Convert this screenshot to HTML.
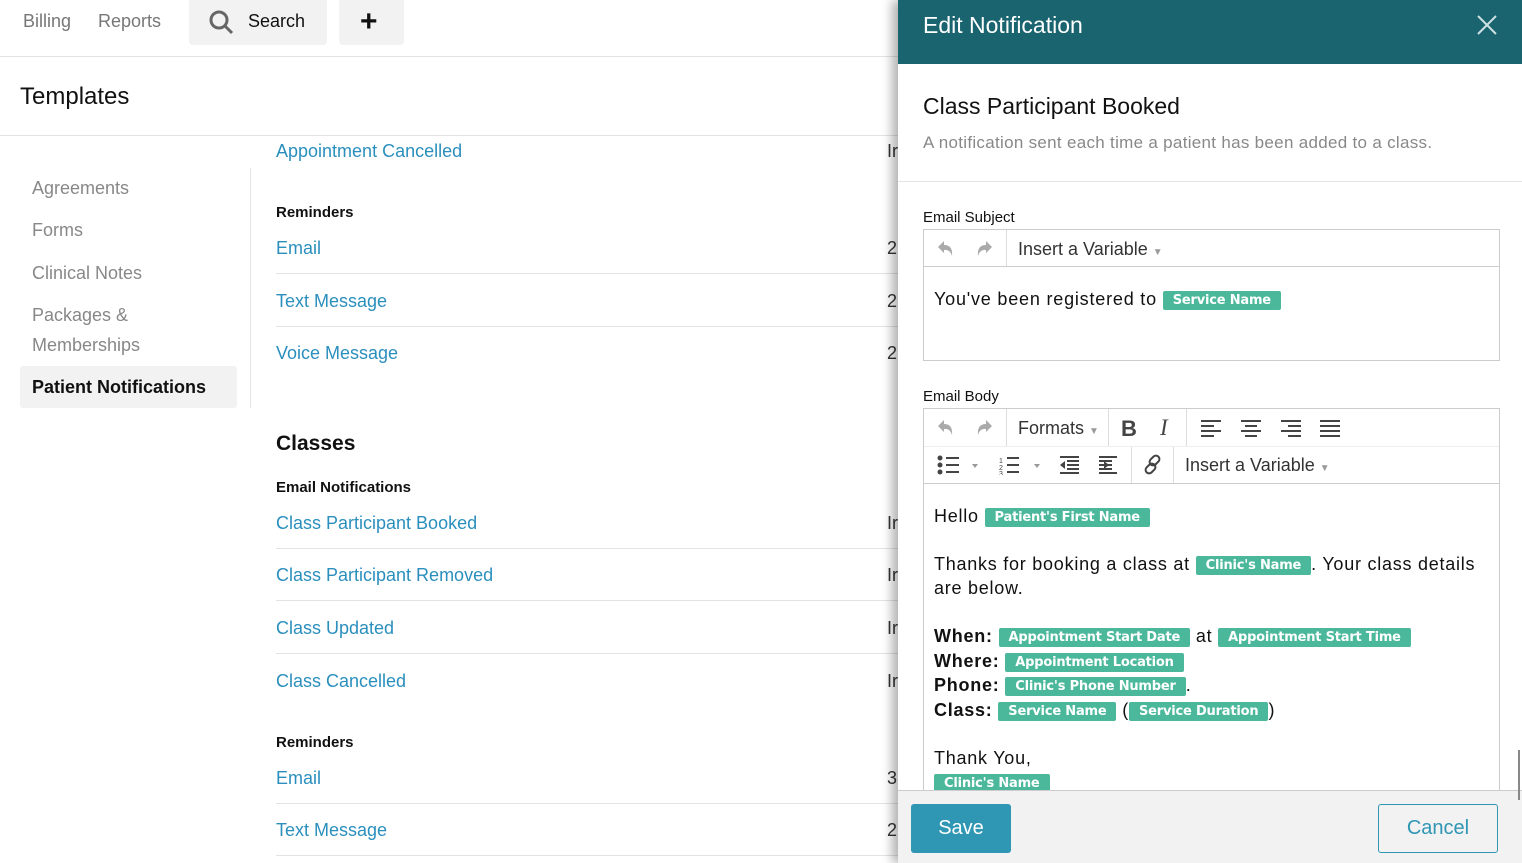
<!DOCTYPE html>
<html><head><meta charset="utf-8"><style>
*{margin:0;padding:0;box-sizing:border-box}
body{width:1522px;height:863px;overflow:hidden;background:#fff;font-family:"Liberation Sans",sans-serif;position:relative;color:#111}
.a{position:absolute;white-space:nowrap}
.lnk{color:#2a8fbd;font-size:18px}
.hr{position:absolute;height:1px;background:#e3e3e3}
.nav{color:#777;font-size:18px}
.side{color:#888;font-size:18px}
.sub{font-size:15px;font-weight:bold;color:#111}
.cut{color:#333;font-size:18px}
.tag{display:inline-block;background:#4cb89b;color:#fff;font-weight:bold;font-size:13px;padding:1px 10px;border-radius:2px;line-height:17px;vertical-align:1px;font-family:"DejaVu Sans",sans-serif;letter-spacing:-0.2px;white-space:nowrap}
.tb{color:#333;font-size:18px}
</style></head><body>
<div class="a nav" style="left:23px;top:11px">Billing</div>
<div class="a nav" style="left:98px;top:11px">Reports</div>
<div class="a" style="left:189px;top:0;width:138px;height:45px;background:#f2f2f2;border-radius:0 0 4px 4px"></div>
<svg class="a" style="left:208px;top:9px" width="28" height="28"><circle cx="11" cy="11" r="8" fill="none" stroke="#666" stroke-width="3"/><line x1="17" y1="17" x2="24" y2="24" stroke="#666" stroke-width="3"/></svg>
<div class="a" style="left:248px;top:11px;font-size:18px">Search</div>
<div class="a" style="left:339px;top:0;width:65px;height:45px;background:#f2f2f2;border-radius:0 0 4px 4px"></div>
<div class="a" style="left:360px;top:5px;font-size:30px;font-weight:bold">+</div>
<div class="hr" style="left:0;top:56px;width:898px"></div>
<div class="a" style="left:20px;top:83px;font-size:24px">Templates</div>
<div class="hr" style="left:0;top:135px;width:898px"></div>
<div class="a side" style="left:32px;top:178px">Agreements</div>
<div class="a side" style="left:32px;top:220px">Forms</div>
<div class="a side" style="left:32px;top:263px">Clinical Notes</div>
<div class="a side" style="left:32px;top:300px;line-height:30px;white-space:normal">Packages &amp;<br>Memberships</div>
<div class="a" style="left:20px;top:366px;width:217px;height:42px;background:#f2f2f2;border-radius:3px"></div>
<div class="a" style="left:32px;top:377px;font-size:18px;font-weight:bold">Patient Notifications</div>
<div class="a" style="left:250px;top:168px;width:1px;height:240px;background:#e3e3e3"></div>
<div class="a lnk" style="left:276px;top:141px">Appointment Cancelled</div><div class="a cut" style="left:887px;top:141px">Ir</div>
<div class="a sub" style="left:276px;top:204px">Reminders</div>
<div class="a lnk" style="left:276px;top:238px">Email</div><div class="a cut" style="left:887px;top:238px">2</div>
<div class="hr" style="left:276px;top:273px;width:622px"></div>
<div class="a lnk" style="left:276px;top:291px">Text Message</div><div class="a cut" style="left:887px;top:291px">2</div>
<div class="hr" style="left:276px;top:326px;width:622px"></div>
<div class="a lnk" style="left:276px;top:343px">Voice Message</div><div class="a cut" style="left:887px;top:343px">2</div>
<div class="a" style="left:276px;top:432px;font-size:21px;font-weight:bold">Classes</div>
<div class="a sub" style="left:276px;top:479px">Email Notifications</div>
<div class="a lnk" style="left:276px;top:513px">Class Participant Booked</div><div class="a cut" style="left:887px;top:513px">Ir</div>
<div class="hr" style="left:276px;top:548px;width:622px"></div>
<div class="a lnk" style="left:276px;top:565px">Class Participant Removed</div><div class="a cut" style="left:887px;top:565px">Ir</div>
<div class="hr" style="left:276px;top:600px;width:622px"></div>
<div class="a lnk" style="left:276px;top:618px">Class Updated</div><div class="a cut" style="left:887px;top:618px">Ir</div>
<div class="hr" style="left:276px;top:653px;width:622px"></div>
<div class="a lnk" style="left:276px;top:671px">Class Cancelled</div><div class="a cut" style="left:887px;top:671px">Ir</div>
<div class="a sub" style="left:276px;top:734px">Reminders</div>
<div class="a lnk" style="left:276px;top:768px">Email</div><div class="a cut" style="left:887px;top:768px">3</div>
<div class="hr" style="left:276px;top:803px;width:622px"></div>
<div class="a lnk" style="left:276px;top:820px">Text Message</div><div class="a cut" style="left:887px;top:820px">2</div>
<div class="hr" style="left:276px;top:855px;width:622px"></div>
<div class="a" style="left:898px;top:0;width:624px;height:863px;background:#fff;box-shadow:-6px 0 10px rgba(0,0,0,.3)"></div>
<div class="a" style="left:898px;top:0;width:624px;height:64px;background:#19646f"></div>
<div class="a" style="left:923px;top:12px;font-size:23px;color:#fff">Edit Notification</div>
<svg class="a" style="left:1477px;top:15px" width="20" height="20"><path d="M1 1L19 19M19 1L1 19" stroke="#cfe0e2" stroke-width="2"/></svg>
<div class="a" style="left:923px;top:93px;font-size:23px;color:#111">Class Participant Booked</div>
<div class="a" style="left:923px;top:133px;font-size:17px;color:#888;letter-spacing:0.3px">A notification sent each time a patient has been added to a class.</div>
<div class="hr" style="left:898px;top:181px;width:624px"></div>
<div class="a" style="left:923px;top:209px;font-size:15px">Email Subject</div>
<div class="a" style="left:923px;top:229px;width:577px;height:132px;border:1px solid #ccc"></div>
<div class="a" style="left:924px;top:266px;width:575px;height:1px;background:#ccc"></div>
<div class="a" style="left:1006px;top:230px;width:1px;height:36px;background:#ddd"></div>
<svg class="a" style="left:935px;top:240px" width="60" height="18"><path d="M3 7L9 1V5Q18 5 17 16Q15 9 9 10V13Z" fill="#aaa"/><path d="M57 7L51 1V5Q42 5 43 16Q45 9 51 10V13Z" fill="#aaa"/></svg>
<div class="a tb" style="left:1018px;top:239px">Insert a Variable <span style="font-size:10px;color:#999">▼</span></div>
<div class="a" style="left:934px;top:289px;font-size:18px;letter-spacing:0.8px">You've been registered to <span class="tag" style="letter-spacing:-0.2px">Service Name</span></div>
<div class="a" style="left:923px;top:388px;font-size:15px">Email Body</div>
<div class="a" style="left:923px;top:408px;width:577px;height:400px;border:1px solid #ccc"></div>
<div class="a" style="left:924px;top:483px;width:575px;height:1px;background:#ccc"></div>
<div class="a" style="left:924px;top:446px;width:575px;height:1px;background:#eee"></div>
<svg class="a" style="left:935px;top:419px" width="60" height="18"><path d="M3 7L9 1V5Q18 5 17 16Q15 9 9 10V13Z" fill="#aaa"/><path d="M57 7L51 1V5Q42 5 43 16Q45 9 51 10V13Z" fill="#aaa"/></svg>
<div class="a" style="left:1006px;top:409px;width:1px;height:37px;background:#ddd"></div>
<div class="a tb" style="left:1018px;top:418px">Formats <span style="font-size:10px;color:#999">▼</span></div>
<div class="a" style="left:1108px;top:409px;width:1px;height:37px;background:#ddd"></div>
<div class="a" style="left:1121px;top:416px;font-size:22px;font-weight:bold;color:#444">B</div>
<div class="a" style="left:1160px;top:415px;font-size:23px;font-style:italic;font-family:'Liberation Serif',serif;color:#444">I</div>
<div class="a" style="left:1186px;top:409px;width:1px;height:37px;background:#ddd"></div>
<svg class="a" style="left:1201px;top:419px" width="142" height="18"><g stroke="#444" stroke-width="2"><path d="M0 2H20M0 7H13M0 12H20M0 17H13"/><path d="M40 2H60M44 7H56M40 12H60M44 17H56"/><path d="M80 2H100M87 7H100M80 12H100M87 17H100"/><path d="M119 2H139M119 7H139M119 12H139M119 17H139"/></g></svg>
<svg class="a" style="left:937px;top:455px" width="180" height="20"><g fill="#444"><circle cx="3" cy="3" r="2.5"/><circle cx="3" cy="10" r="2.5"/><circle cx="3" cy="17" r="2.5"/></g><g stroke="#444" stroke-width="2"><path d="M9 3H22M9 10H22M9 17H22"/><path d="M70 3H82M70 10H82M70 17H82"/><path d="M123 2H142M130 6H142M130 10H142M130 14H142M123 18H142M162 2H181M162 6H175M162 10H175M162 14H175M162 18H181"/></g><path d="M35 9L41 9L38 13Z M97 9L103 9L100 13Z" fill="#999"/><path d="M128 6L123 10L128 14Z M167 6L172 10L167 14Z" fill="#444"/><text x="62" y="8" font-size="7" fill="#444">1</text><text x="62" y="15" font-size="7" fill="#444">2</text><text x="62" y="21" font-size="7" fill="#444">3</text></svg>
<div class="a" style="left:1131px;top:447px;width:1px;height:36px;background:#ddd"></div>
<svg class="a" style="left:1142px;top:454px" width="22" height="22"><g fill="none" stroke="#444" stroke-width="2"><rect x="9" y="1" width="7" height="11" rx="3.5" transform="rotate(45 12.5 6.5)"/><rect x="5" y="9" width="7" height="11" rx="3.5" transform="rotate(45 8.5 14.5)"/></g></svg>
<div class="a" style="left:1173px;top:447px;width:1px;height:36px;background:#ddd"></div>
<div class="a tb" style="left:1185px;top:455px">Insert a Variable <span style="font-size:10px;color:#999">▼</span></div>
<div class="a" style="left:924px;top:484px;width:575px;height:306px;overflow:hidden;font-size:18px;letter-spacing:0.75px;line-height:24px;padding:20px 10px 0;white-space:normal">
<div>Hello <span class="tag">Patient's First Name</span></div>
<div style="margin-top:24px">Thanks for booking a class at <span class="tag">Clinic's Name</span>. Your class details are below.</div>
<div style="margin-top:24px;line-height:24.5px"><b>When:</b> <span class="tag">Appointment Start Date</span> at <span class="tag">Appointment Start Time</span><br><b>Where:</b> <span class="tag">Appointment Location</span><br><b>Phone:</b> <span class="tag">Clinic's Phone Number</span>.<br><b>Class:</b> <span class="tag">Service Name</span> (<span class="tag">Service Duration</span>)</div>
<div style="margin-top:24px">Thank You,<br><span class="tag">Clinic's Name</span></div>
</div>
<div class="a" style="left:898px;top:790px;width:624px;height:73px;background:#f2f2f2;border-top:1px solid #ccc"></div>
<div class="a" style="left:911px;top:804px;width:100px;height:49px;background:#2f96b4;border-radius:3px;color:#fff;font-size:20px;text-align:center;line-height:49px">Save</div>
<div class="a" style="left:1378px;top:804px;width:120px;height:49px;border:1px solid #2f96b4;border-radius:3px;color:#2f96b4;font-size:20px;text-align:center;line-height:47px">Cancel</div>
<div class="a" style="left:1518px;top:750px;width:2px;height:50px;background:#888"></div>
</body></html>
